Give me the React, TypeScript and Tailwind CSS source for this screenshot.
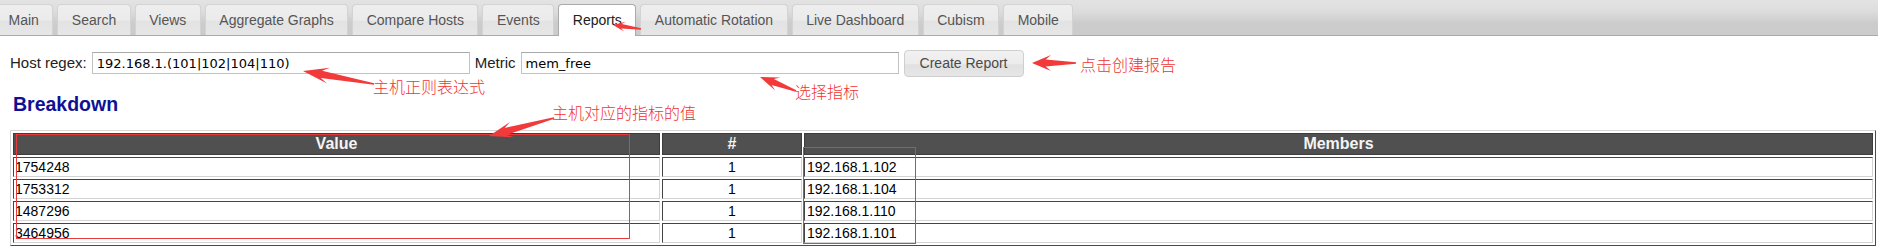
import React from 'react'

const tabs = [
  'Main',
  'Search',
  'Views',
  'Aggregate Graphs',
  'Compare Hosts',
  'Events',
  'Reports',
  'Automatic Rotation',
  'Live Dashboard',
  'Cubism',
  'Mobile',
]

const rows = [
  { value: '1754248', count: 1, members: '192.168.1.102' },
  { value: '1753312', count: 1, members: '192.168.1.104' },
  { value: '1487296', count: 1, members: '192.168.1.110' },
  { value: '3464956', count: 1, members: '192.168.1.101' },
]

// tapered annotation arrow, tail -> tip
function arrowPoints(x1: number, y1: number, x2: number, y2: number, head: number, half: number) {
  const dx = x2 - x1
  const dy = y2 - y1
  const len = Math.hypot(dx, dy)
  const ux = dx / len
  const uy = dy / len
  const nx = -uy
  const ny = ux
  const bx = x2 - ux * head
  const by = y2 - uy * head
  const kx = x2 - ux * head * 0.72
  const ky = y2 - uy * head * 0.72
  const neck = half * 0.45
  const tail = 0.7
  const pts = [
    [x1 + nx * tail, y1 + ny * tail],
    [kx + nx * neck, ky + ny * neck],
    [bx + nx * half, by + ny * half],
    [x2, y2],
    [bx - nx * half, by - ny * half],
    [kx - nx * neck, ky - ny * neck],
    [x1 - nx * tail, y1 - ny * tail],
  ]
  return pts.map((p) => p.map((v) => v.toFixed(1)).join(',')).join(' ')
}

const arrows = [
  { x1: 641, y1: 29, x2: 613, y2: 25, head: 12, half: 5 },
  { x1: 374, y1: 84, x2: 303, y2: 71, head: 26, half: 8 },
  { x1: 796, y1: 91, x2: 760, y2: 77, head: 19, half: 7 },
  { x1: 1076, y1: 63, x2: 1032, y2: 63, head: 19, half: 8 },
  { x1: 554, y1: 118, x2: 489, y2: 136, head: 24, half: 8 },
]

const notes = [
  { text: '主机正则表达式', left: 373, top: 78 },
  { text: '选择指标', left: 795, top: 83 },
  { text: '点击创建报告', left: 1080, top: 56 },
  { text: '主机对应的指标的值', left: 552, top: 104 },
]

export default function App() {
  return (
    <div className="relative w-[1878px] h-[251px] overflow-hidden bg-white font-['Liberation_Sans',Arial,sans-serif]">
      {/* tab strip */}
      <div className="flex items-end h-[36px] border-b border-[#aaaaaa] bg-[linear-gradient(to_bottom,#e3e3e3_0%,#dcdcdc_35%,#cccccc_65%,#cbcbcb_100%)]">
        <div className="flex items-end gap-[4px] -ml-[6px]">
          {tabs.map((t) =>
            t === 'Reports' ? (
              <div
                key={t}
                className="flex items-center h-[32px] -mb-px px-[13.5px] border border-b-0 border-[#aaaaaa] rounded-t-[4px] bg-white text-[14px] text-[#212121]"
              >
                {t}
              </div>
            ) : (
              <div
                key={t}
                className="flex items-center h-[31px] px-[13.5px] border border-b-0 border-[#d3d3d3] rounded-t-[4px] bg-[linear-gradient(to_bottom,#eeeeee_0%,#ebebeb_50%,#e3e3e3_55%,#e6e6e6_100%)] text-[14px] text-[#555555]"
              >
                {t}
              </div>
            )
          )}
        </div>
      </div>

      {/* report form */}
      <div className="flex items-center h-[28px] mt-[13px] pl-[10px] text-[15px] text-[#222222]">
        <span>Host regex:</span>
        <input
          readOnly
          value="192.168.1.(101|102|104|110)"
          className="ml-[5px] w-[378px] h-[22px] px-[4px] border border-[#c2c2c2] border-t-[#a8a8a8] bg-white font-['DejaVu_Sans',Verdana,sans-serif] text-[13px] text-black outline-none"
        />
        <span className="ml-[5px]">Metric</span>
        <input
          readOnly
          value="mem_free"
          className="ml-[5px] w-[378px] h-[22px] px-[4px] border border-[#c2c2c2] border-t-[#a8a8a8] bg-white font-['DejaVu_Sans',Verdana,sans-serif] text-[13px] text-black outline-none"
        />
        <button className="ml-[5px] w-[120px] h-[27px] border border-[#cfcfcf] rounded-[4px] bg-[linear-gradient(to_bottom,#f1f1f1_0%,#ececec_50%,#e1e1e1_55%,#e6e6e6_100%)] text-[14px] text-[#4a4a4a]">
          Create Report
        </button>
      </div>

      <h3 className="mt-[16px] pl-[13px] leading-[22px] text-[19.5px] font-bold text-[#101094]">Breakdown</h3>

      {/* breakdown table */}
      <div className="mt-[15px] pl-[10px]">
        <table className="table-fixed w-[1866px] border-separate border-spacing-[2px] border border-t-[#d6d6d6] border-l-[#d6d6d6] border-b-[#4a4a4a] border-r-[#4a4a4a] text-[14px]">
          <colgroup>
            <col className="w-[647px]" />
            <col className="w-[140px]" />
            <col />
          </colgroup>
          <thead>
            <tr>
              {['Value', '#', 'Members'].map((h) => (
                <th
                  key={h}
                  className="h-[22px] p-0 border border-[#3c3c3c] bg-[#505050] text-center text-[16px] font-bold leading-[20px] text-[#f4f4f4]"
                >
                  {h}
                </th>
              ))}
            </tr>
          </thead>
          <tbody>
            {rows.map((r) => (
              <tr key={r.members}>
                <td className="h-[20px] p-0 pl-[1px] border border-t-[#444444] border-l-[#444444] border-b-[#d4d4d4] border-r-[#d4d4d4] leading-[18px] text-black">
                  {r.value}
                </td>
                <td className="h-[20px] p-0 border border-t-[#444444] border-l-[#444444] border-b-[#d4d4d4] border-r-[#d4d4d4] text-center leading-[18px] text-black">
                  {r.count}
                </td>
                <td className="h-[20px] p-0 pl-[2px] border border-t-[#444444] border-l-[#444444] border-b-[#d4d4d4] border-r-[#d4d4d4] leading-[18px] text-black">
                  {r.members}
                </td>
              </tr>
            ))}
          </tbody>
        </table>
      </div>

      {/* annotations */}
      <div className="absolute left-[16px] top-[134px] w-[614px] h-[105px] border border-[#e83c3c] pointer-events-none" />
      <div className="absolute left-[803px] top-[147px] w-[113px] h-[97px] border border-[#e83c3c] pointer-events-none" />
      {notes.map((n) => (
        <div
          key={n.text}
          className="absolute text-[16px] leading-[16px] text-[#f03434] whitespace-nowrap font-['Noto_Sans_CJK_SC',sans-serif] font-light"
          style={{ left: n.left, top: n.top }}
        >
          {n.text}
        </div>
      ))}
      <svg className="absolute inset-0 pointer-events-none" width="1878" height="251">
        {arrows.map((a, i) => (
          <polygon key={i} points={arrowPoints(a.x1, a.y1, a.x2, a.y2, a.head, a.half)} fill="#f23a3a" />
        ))}
      </svg>
    </div>
  )
}
